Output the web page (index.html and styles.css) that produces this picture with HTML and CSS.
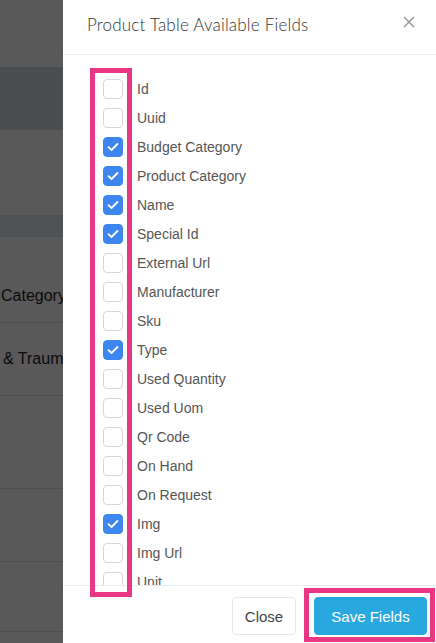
FILE: index.html
```html
<!DOCTYPE html>
<html>
<head>
<meta charset="utf-8">
<link rel="stylesheet" href="styles.css">
</head>
<body>
<div class="page">
  <div class="topbar"></div>
  <div class="band"></div>
  <div class="spacer"></div>
  <div class="thead"></div>
  <div class="trow r1"><span class="cell c1">Category Name</span></div>
  <div class="trow r2"><span class="cell c2">&amp; Trauma Care</span></div>
  <div class="trow r3"></div>
  <div class="trow r4"></div>
  <div class="trow r5"></div>
</div>
<div class="overlay"></div>
<div class="modal">
  <div class="modal-header">
    <h4 class="title">Product Table Available Fields</h4>
    <button class="close-x" aria-label="Close">
      <svg width="12" height="12" viewBox="0 0 12 12"><path d="M1 1 L11 11 M11 1 L1 11" stroke="#999" stroke-width="1.5" fill="none"/></svg>
    </button>
  </div>
  <div class="modal-body">
    <ul class="fields">
      <li class="field"><span class="box"></span><span class="label">Id</span></li>
      <li class="field"><span class="box"></span><span class="label">Uuid</span></li>
      <li class="field"><span class="box on"><svg width="12" height="10" viewBox="0 0 12 10"><path d="M1.5 5.2 L4.5 8 L10.5 2" stroke="#fff" stroke-width="1.8" fill="none" stroke-linecap="round" stroke-linejoin="round"/></svg></span><span class="label">Budget Category</span></li>
      <li class="field"><span class="box on"><svg width="12" height="10" viewBox="0 0 12 10"><path d="M1.5 5.2 L4.5 8 L10.5 2" stroke="#fff" stroke-width="1.8" fill="none" stroke-linecap="round" stroke-linejoin="round"/></svg></span><span class="label">Product Category</span></li>
      <li class="field"><span class="box on"><svg width="12" height="10" viewBox="0 0 12 10"><path d="M1.5 5.2 L4.5 8 L10.5 2" stroke="#fff" stroke-width="1.8" fill="none" stroke-linecap="round" stroke-linejoin="round"/></svg></span><span class="label">Name</span></li>
      <li class="field"><span class="box on"><svg width="12" height="10" viewBox="0 0 12 10"><path d="M1.5 5.2 L4.5 8 L10.5 2" stroke="#fff" stroke-width="1.8" fill="none" stroke-linecap="round" stroke-linejoin="round"/></svg></span><span class="label">Special Id</span></li>
      <li class="field"><span class="box"></span><span class="label">External Url</span></li>
      <li class="field"><span class="box"></span><span class="label">Manufacturer</span></li>
      <li class="field"><span class="box"></span><span class="label">Sku</span></li>
      <li class="field"><span class="box on"><svg width="12" height="10" viewBox="0 0 12 10"><path d="M1.5 5.2 L4.5 8 L10.5 2" stroke="#fff" stroke-width="1.8" fill="none" stroke-linecap="round" stroke-linejoin="round"/></svg></span><span class="label">Type</span></li>
      <li class="field"><span class="box"></span><span class="label">Used Quantity</span></li>
      <li class="field"><span class="box"></span><span class="label">Used Uom</span></li>
      <li class="field"><span class="box"></span><span class="label">Qr Code</span></li>
      <li class="field"><span class="box"></span><span class="label">On Hand</span></li>
      <li class="field"><span class="box"></span><span class="label">On Request</span></li>
      <li class="field"><span class="box on"><svg width="12" height="10" viewBox="0 0 12 10"><path d="M1.5 5.2 L4.5 8 L10.5 2" stroke="#fff" stroke-width="1.8" fill="none" stroke-linecap="round" stroke-linejoin="round"/></svg></span><span class="label">Img</span></li>
      <li class="field"><span class="box"></span><span class="label">Img Url</span></li>
      <li class="field"><span class="box"></span><span class="label">Unit</span></li>
    </ul>
  </div>
  <div class="modal-footer">
    <button class="btn btn-default">Close</button>
    <button class="btn btn-primary">Save Fields</button>
  </div>
  <div class="hl hl-boxes"></div>
  <div class="hl hl-save"></div>
</div>
</body>
</html>
```
FILE: styles.css
```css
html, body {
  margin: 0;
  padding: 0;
  width: 436px;
  height: 643px;
  overflow: hidden;
  background: #fff;
  font-family: "Liberation Sans", Arial, sans-serif;
}

.page {
  display: flex;
  flex-direction: column;
  width: 436px;
}
.topbar { height: 67px; background: #fff; }
.band { height: 63px; background: #d3dce2; }
.spacer { height: 85px; background: #fff; }
.thead { height: 22px; background: #e2eaf0; }
.trow {
  display: flex;
  align-items: flex-start;
  border-bottom: 1px solid #e0e0e0;
  color: #222;
  font-size: 16px;
  line-height: 18px;
}
.r1 { height: 85px; }
.r2 { height: 72px; }
.r3 { height: 92px; }
.r4 { height: 72px; }
.r5 { height: 69px; }
.cell { white-space: nowrap; }
.c1 { padding-left: 1px; padding-top: 50px; }
.c2 { padding-left: 3px; padding-top: 27px; }

.overlay {
  position: fixed;
  inset: 0;
  background: rgba(0, 0, 0, 0.65);
}

.modal {
  position: fixed;
  top: 0;
  left: 63px;
  width: 373px;
  height: 643px;
  background: #fff;
  display: flex;
  flex-direction: column;
}

.modal-header {
  height: 54px;
  border-bottom: 1px solid #e8edf2;
  display: flex;
  align-items: center;
  justify-content: space-between;
  padding: 0 21px 0 24px;
  box-sizing: content-box;
  flex: none;
}
.title {
  margin: 0;
  font-family: "Lato", "Open Sans", sans-serif;
  font-weight: 300;
  font-size: 17px;
  color: #333;
  letter-spacing: 0.2px;
  padding-bottom: 5px;
}
.close-x {
  border: 0;
  background: none;
  padding: 0;
  width: 12px;
  height: 12px;
  display: flex;
  margin-bottom: 10px;
}

.modal-body {
  flex: 1;
  overflow: hidden;
  padding: 19px 0 0 40px;
}
.fields {
  list-style: none;
  margin: 0;
  padding: 0;
}
.field {
  height: 29px;
  display: flex;
  align-items: center;
}
.box {
  width: 18px;
  height: 18px;
  border: 1px solid #d4d8de;
  border-radius: 4px;
  box-sizing: content-box;
  flex: none;
  display: flex;
  align-items: center;
  justify-content: center;
}
.box.on {
  background: #3d86f0;
  border-color: #3d86f0;
}
.label {
  margin-left: 14px;
  font-size: 14px;
  color: #555;
}

.modal-footer {
  flex: none;
  border-top: 1px solid #e8edf2;
  padding: 11px 9px 8px 0;
  display: flex;
  justify-content: flex-end;
  gap: 18px;
}
.btn {
  height: 38px;
  border-radius: 4px;
  font-family: "Liberation Sans", Arial, sans-serif;
  font-size: 15px;
  cursor: pointer;
}
.btn-default {
  width: 64px;
  background: #fff;
  border: 1px solid #e3e6ea;
  color: #444;
}
.btn-primary {
  width: 113px;
  background: #29a8e0;
  border: 1px solid #29a8e0;
  color: #fff;
}

.hl {
  position: absolute;
  border: 5px solid #ea3783;
  box-sizing: border-box;
  pointer-events: none;
}
.hl-boxes {
  left: 27px;
  top: 68px;
  width: 42px;
  height: 529px;
}
.hl-save {
  left: 241px;
  top: 588px;
  width: 131px;
  height: 54px;
}
```
